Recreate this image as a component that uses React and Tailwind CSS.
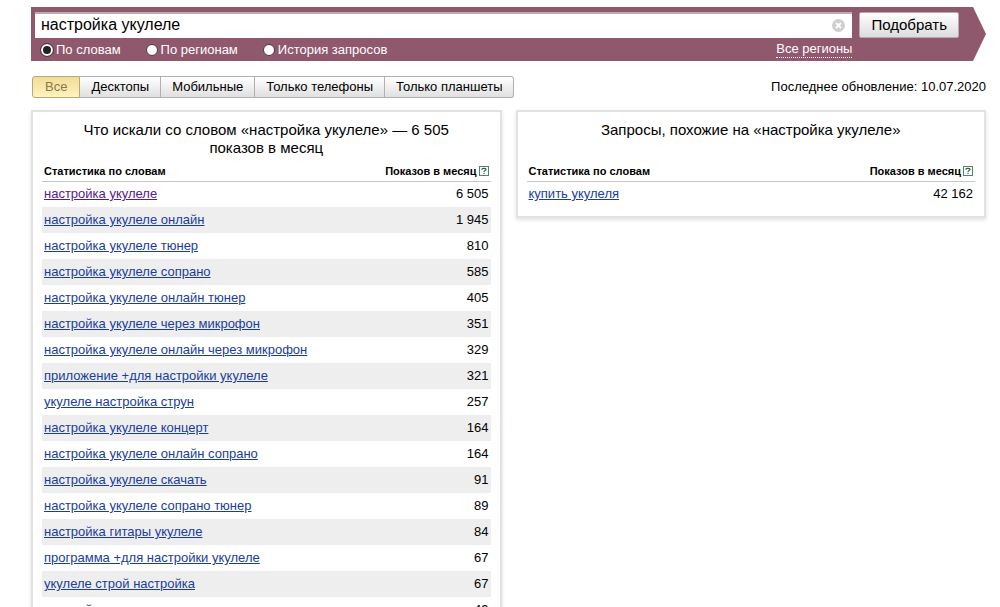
import { useState } from 'react'

const MODES = [
  { id: 'words', label: 'По словам' },
  { id: 'regions', label: 'По регионам' },
  { id: 'history', label: 'История запросов' },
]

const DEVICES = ['Все', 'Десктопы', 'Мобильные', 'Только телефоны', 'Только планшеты']

const words = [
  ['настройка укулеле', '6 505'],
  ['настройка укулеле онлайн', '1 945'],
  ['настройка укулеле тюнер', '810'],
  ['настройка укулеле сопрано', '585'],
  ['настройка укулеле онлайн тюнер', '405'],
  ['настройка укулеле через микрофон', '351'],
  ['настройка укулеле онлайн через микрофон', '329'],
  ['приложение +для настройки укулеле', '321'],
  ['укулеле настройка струн', '257'],
  ['настройка укулеле концерт', '164'],
  ['настройка укулеле онлайн сопрано', '164'],
  ['настройка укулеле скачать', '91'],
  ['настройка укулеле сопрано тюнер', '89'],
  ['настройка гитары укулеле', '84'],
  ['программа +для настройки укулеле', '67'],
  ['укулеле строй настройка', '67'],
  ['настройка', '49'],
]

const similar = [['купить укулеля', '42 162']]

function ClearIcon() {
  return (
    <svg width="13" height="13" viewBox="0 0 13 13" aria-hidden="true">
      <circle cx="6.5" cy="6.5" r="6.5" fill="#cfcfcf" />
      <path d="M4 4l5 5M9 4L4 9" stroke="#fff" strokeWidth="1.8" />
    </svg>
  )
}

function HelpIcon() {
  return (
    <svg width="10" height="10" viewBox="0 0 10 10" aria-hidden="true">
      <rect x="0.5" y="0.5" width="9" height="9" fill="#fff" stroke="#4f8465" />
      <path d="M3 3.8V3.2C3 2.6 3.6 2.3 4.8 2.3 6.2 2.3 7 2.7 7 3.5 7 4.6 5 4.6 5 6" fill="none" stroke="#2f6547" strokeWidth="1.2" />
      <rect x="4.4" y="6.8" width="1.2" height="1.2" fill="#2f6547" />
    </svg>
  )
}

function SearchBar() {
  const [query, setQuery] = useState('настройка укулеле')
  const [mode, setMode] = useState('words')

  return (
    <form
      onSubmit={e => e.preventDefault()}
      className="flex items-start gap-[7px] bg-[#90586d] pt-[5px] pr-[27px] pb-[3px] pl-1 text-[13px] leading-4 [clip-path:polygon(0_0,calc(100%_-_13px)_0,100%_50%,calc(100%_-_13px)_100%,0_100%)]"
    >
      <div className="min-w-0 flex-1">
        <div className="flex h-[26px] items-center border-t-2 border-[#b9adb2] bg-white pr-[7px] pb-[2px]">
          <input
            type="text"
            aria-label="Запрос"
            value={query}
            onChange={e => setQuery(e.target.value)}
            className="h-[22px] min-w-0 flex-1 bg-transparent px-[6px] text-base text-black outline-none"
          />
          <button type="button" aria-label="Очистить" onClick={() => setQuery('')}>
            <ClearIcon />
          </button>
        </div>
        <div className="flex justify-between pt-[3px] text-white">
          <div className="flex gap-[25px] pl-[6px]">
            {MODES.map(m => (
              <label key={m.id} className="flex items-center gap-[3px]">
                <input
                  type="radio"
                  name="mode"
                  checked={mode === m.id}
                  onChange={() => setMode(m.id)}
                  className="size-3 appearance-none rounded-full border border-[#4a3a40] bg-white checked:border-2 checked:border-white checked:bg-[#222] checked:outline-1 checked:outline-[#4a3a40]"
                />
                {m.label}
              </label>
            ))}
          </div>
          <a href="#regions" className="border-b border-dotted border-white">Все регионы</a>
        </div>
      </div>
      <button type="submit" className="h-[26px] rounded-[2px] border border-[#b9aab0] bg-linear-to-b from-white to-[#dcdcdc] px-[11px] text-[15px] leading-6 text-black">
        Подобрать
      </button>
    </form>
  )
}

function DeviceTabs() {
  const [active, setActive] = useState('Все')

  return (
    <div className="flex">
      {DEVICES.map(d => (
        <button
          key={d}
          type="button"
          onClick={() => setActive(d)}
          className={
            d === active
              ? 'h-[22px] border border-[#b8a77a] bg-linear-to-b from-[#f3dc97] to-[#fff3bd] px-3 text-[#85794f] first:rounded-l-[3px] last:rounded-r-[3px]'
              : 'h-[22px] border-y border-r border-[#b0b0b0] bg-linear-to-b from-white to-[#e0e0e0] px-[11px] text-black first:rounded-l-[3px] first:border-l last:rounded-r-[3px]'
          }
        >
          {d}
        </button>
      ))}
    </div>
  )
}

function StatPanel({ title, rows, visited }) {
  return (
    <section className="min-w-0 flex-1 border-2 border-[#e2e2e2] bg-white px-[9px] pt-[9px] pb-[9px] shadow-[0_2px_4px_rgba(0,0,0,0.12)]">
      <h2 className="min-h-9 px-6 text-center text-[15px] leading-[18px]">{title}</h2>
      <table className="mt-1 w-full border-collapse">
        <thead>
          <tr className="h-5 border-b border-[#c8c8c8] text-[11px]">
            <th className="px-[2px] text-left font-bold">Статистика по словам</th>
            <th className="px-[2px] font-bold">
              <div className="flex items-center justify-end gap-[2px]">
                Показов в месяц
                <a href="#help" aria-label="Справка"><HelpIcon /></a>
              </div>
            </th>
          </tr>
        </thead>
        <tbody>
          {rows.map(([phrase, count]) => (
            <tr key={phrase} className="h-[26px] even:bg-[#eee]">
              <td className="px-[2px]">
                <a href="#phrase" className={phrase === visited ? 'text-[#551a8b] underline' : 'text-[#1a3d9c] underline'}>{phrase}</a>
              </td>
              <td className="px-[2px] text-right">{count}</td>
            </tr>
          ))}
        </tbody>
      </table>
    </section>
  )
}

export default function App() {
  return (
    <div className="h-screen overflow-hidden bg-white pt-[7px] pr-[14px] pl-[31px] font-['Liberation_Sans',Arial,sans-serif] text-[13px] leading-4 text-black">
      <SearchBar />
      <div className="flex items-center justify-between pt-[15px] pb-3 pl-px">
        <DeviceTabs />
        <p>Последнее обновление: 10.07.2020</p>
      </div>
      <main className="flex items-start gap-[14px]">
        <StatPanel title="Что искали со словом «настройка укулеле» — 6 505 показов в месяц" rows={words} visited="настройка укулеле" />
        <StatPanel title="Запросы, похожие на «настройка укулеле»" rows={similar} />
      </main>
    </div>
  )
}
